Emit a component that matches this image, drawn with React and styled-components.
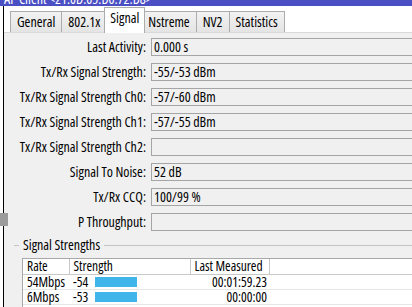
import React from 'react'
import styled, { createGlobalStyle, css } from 'styled-components'

const GlobalStyle = createGlobalStyle`
  html, body {
    margin: 0;
    padding: 0;
    background: #ffffff;
    overflow: hidden;
  }
  body {
    font-family: "Open Sans", "Liberation Sans", Arial, sans-serif;
    font-stretch: 78%;
    font-size: 14px;
    line-height: 16px;
    color: #000;
  }
`

const Screen = styled.div`
  position: relative;
  width: 420px;
  height: 307px;
  display: flex;
  flex-direction: column;
  overflow: hidden;
  background: #fff;
`

const TitleBar = styled.div`
  height: 6px;
  flex: none;
  background: #4b4fc4;
  overflow: hidden;
`

const TitleText = styled.div`
  color: #fff;
  font-size: 14px;
  line-height: 14px;
  margin-top: -8px;
  padding-left: 4px;
`

const Frame = styled.div`
  flex: 1;
  margin-left: 3px;
  border-left: 1px solid #000;
  display: flex;
  flex-direction: column;
  min-height: 0;
`

const TabStrip = styled.div`
  height: 26px;
  flex: none;
  display: flex;
  align-items: flex-end;
  padding-left: 7px;
  background: #fff;
`

const Tab = styled.div`
  box-sizing: border-box;
  height: 21px;
  padding: 0 6px;
  margin-left: -1px;
  border: 1px solid #acacac;
  border-bottom: none;
  background: linear-gradient(#f2f2f2, #e4e4e4);
  line-height: 20px;
  white-space: nowrap;
  ${p => p.$active && css`
    position: relative;
    z-index: 1;
    height: 26px;
    margin: 0 -3px -1px -3px;
    padding: 0 5px;
    background: #fff;
    line-height: 19px;
  `}
`

const Panel = styled.div`
  flex: 1;
  display: flex;
  flex-direction: column;
  background: #f0f0f0;
  border-top: 1px solid #d9d9d9;
  padding-top: 5px;
  min-height: 0;
`

const Form = styled.div`
  display: flex;
  flex-direction: column;
  gap: 7px;
`

const Row = styled.div`
  height: 18px;
  display: grid;
  grid-template-columns: 142px 1fr;
  column-gap: 5px;
  align-items: center;
`

const Label = styled.div`
  text-align: right;
  white-space: nowrap;
`

const Field = styled.div`
  box-sizing: border-box;
  height: 18px;
  margin-right: -8px;
  padding-left: 2px;
  border: 1px solid #a5a5a5;
  background: #f0f0f0;
  line-height: 16px;
  white-space: nowrap;
`

const Group = styled.div`
  flex: 1;
  display: flex;
  flex-direction: column;
  margin-top: 7px;
  min-height: 0;
`

const GroupTitle = styled.div`
  height: 14px;
  display: flex;
  align-items: center;
  gap: 4px;
  padding-left: 10px;
  line-height: 14px;
  &::before, &::after {
    content: '';
    height: 1px;
    background: #c4c4c4;
  }
  &::before { width: 5px; }
  &::after { flex: 1; }
`

const ListView = styled.div`
  flex: 1;
  margin: 6px 0 0 18px;
  background: #fff;
  border-top: 1px solid #a8a8a8;
  border-left: 1px solid #a8a8a8;
`

const Table = styled.table`
  width: 100%;
  border-collapse: collapse;
  table-layout: fixed;
  font: inherit;
  font-size: 13.5px;
`

const Col = styled.col`
  width: ${p => (p.$width ? `${p.$width}px` : 'auto')};
`

const HeadCell = styled.th`
  height: 15px;
  padding: 0 0 0 4px;
  font-weight: normal;
  text-align: left;
  line-height: 15px;
  border-right: 1px solid #c8c8c8;
  border-bottom: 1px solid #c8c8c8;
  white-space: nowrap;
`

const Cell = styled.td`
  height: 14px;
  padding: 0 0 0 4px;
  line-height: 14px;
  border-bottom: 1px solid #e6e6e6;
  text-align: ${p => (p.$right ? 'right' : 'left')};
  padding-right: ${p => (p.$right ? '2px' : '0')};
  white-space: nowrap;
`

const Strength = styled.div`
  height: 14px;
  display: grid;
  grid-template-columns: 22px 42px;
  align-items: center;
`

const Bar = styled.div`
  height: 10px;
  background: #3fb5e9;
`

const Shadow = styled.div`
  position: absolute;
  left: 0;
  top: 213px;
  width: 8px;
  height: 13px;
  background: #9c9c9c;
`

const tabs = ['General', '802.1x', 'Signal', 'Nstreme', 'NV2', 'Statistics']

const fields = [
  ['Last Activity', '0.000 s'],
  ['Tx/Rx Signal Strength', '-55/-53 dBm'],
  ['Tx/Rx Signal Strength Ch0', '-57/-60 dBm'],
  ['Tx/Rx Signal Strength Ch1', '-57/-55 dBm'],
  ['Tx/Rx Signal Strength Ch2', ''],
  ['Signal To Noise', '52 dB'],
  ['Tx/Rx CCQ', '100/99 %'],
  ['P Throughput', ''],
]

const rates = [
  { rate: '54Mbps', strength: '-54', measured: '00:01:59.23' },
  { rate: '6Mbps', strength: '-53', measured: '00:00:00' },
]

export default function App() {
  return (
    <>
      <GlobalStyle />
      <Screen>
        <TitleBar>
          <TitleText>AP Client &lt;21:0D:65:D6:72:D8&gt;</TitleText>
        </TitleBar>
        <Frame>
          <TabStrip>
            {tabs.map(t => (
              <Tab key={t} $active={t === 'Signal'}>{t}</Tab>
            ))}
          </TabStrip>
          <Panel>
            <Form>
              {fields.map(([label, value]) => (
                <Row key={label}>
                  <Label>{label}:</Label>
                  <Field>{value}</Field>
                </Row>
              ))}
            </Form>
            <Group>
              <GroupTitle>Signal Strengths</GroupTitle>
              <ListView>
                <Table>
                  <colgroup>
                    <Col $width={46} />
                    <Col $width={121} />
                    <Col $width={79} />
                    <Col />
                  </colgroup>
                  <thead>
                    <tr>
                      <HeadCell>Rate</HeadCell>
                      <HeadCell>Strength</HeadCell>
                      <HeadCell>Last Measured</HeadCell>
                      <HeadCell />
                    </tr>
                  </thead>
                  <tbody>
                    {rates.map(r => (
                      <tr key={r.rate}>
                        <Cell>{r.rate}</Cell>
                        <Cell>
                          <Strength>{r.strength}<Bar /></Strength>
                        </Cell>
                        <Cell $right>{r.measured}</Cell>
                        <Cell />
                      </tr>
                    ))}
                  </tbody>
                </Table>
              </ListView>
            </Group>
          </Panel>
        </Frame>
        <Shadow />
      </Screen>
    </>
  )
}
